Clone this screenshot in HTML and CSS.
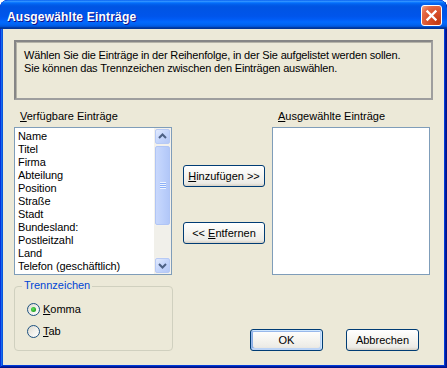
FILE: index.html
```html
<!DOCTYPE html>
<html lang="de">
<head>
<meta charset="utf-8">
<title>Ausgewählte Einträge</title>
<link rel="stylesheet" href="styles.css">
</head>
<body>
<div class="window">
  <div class="titlebar">
    <span class="title">Ausgewählte Einträge</span>
    <button class="close" aria-label="Schließen">
      <svg width="19" height="19" viewBox="0 0 19 19"><path d="M5.5 5.5 L13.5 13.5 M13.5 5.5 L5.5 13.5" stroke="#fff" stroke-width="2.4" stroke-linecap="square" fill="none"/></svg>
    </button>
  </div>
  <div class="client">
    <div class="info">
      <p>Wählen Sie die Einträge in der Reihenfolge, in der Sie aufgelistet werden sollen.<br>Sie können das Trennzeichen zwischen den Einträgen auswählen.</p>
    </div>
    <div class="lists">
      <div class="col">
        <div class="label"><u>V</u>erfügbare Einträge</div>
        <div class="listbox">
          <ul class="items">
            <li>Name</li>
            <li>Titel</li>
            <li>Firma</li>
            <li>Abteilung</li>
            <li>Position</li>
            <li>Straße</li>
            <li>Stadt</li>
            <li>Bundesland:</li>
            <li>Postleitzahl</li>
            <li>Land</li>
            <li>Telefon (geschäftlich)</li>
          </ul>
          <div class="scrollbar">
            <div class="sb-btn">
              <svg width="15" height="15" viewBox="0 0 15 15"><path d="M4 9 L7.5 5.5 L11 9" stroke="#4D6185" stroke-width="2" fill="none"/></svg>
            </div>
            <div class="sb-thumb"><span class="grip"></span></div>
            <div class="sb-track"></div>
            <div class="sb-btn">
              <svg width="15" height="15" viewBox="0 0 15 15"><path d="M4 6 L7.5 9.5 L11 6" stroke="#4D6185" stroke-width="2" fill="none"/></svg>
            </div>
          </div>
        </div>
      </div>
      <div class="mid">
        <button class="btn btn-wide"><u>H</u>inzufügen &gt;&gt;</button>
        <button class="btn btn-wide">&lt;&lt; <u>E</u>ntfernen</button>
      </div>
      <div class="col">
        <div class="label"><u>A</u>usgewählte Einträge</div>
        <div class="listbox"></div>
      </div>
    </div>
    <div class="bottom">
      <div class="group">
        <span class="group-title">Trennzeichen</span>
        <label class="radio"><span class="dot checked"></span><span><u>K</u>omma</span></label>
        <label class="radio"><span class="dot"></span><span><u>T</u>ab</span></label>
      </div>
      <div class="actions">
        <button class="btn btn-default">OK</button>
        <button class="btn">Abbrechen</button>
      </div>
    </div>
  </div>
</div>
</body>
</html>
```
FILE: styles.css
```css
html, body {
  margin: 0;
  padding: 0;
  background: #ffffff;
}
body {
  font-family: "Liberation Sans", Tahoma, Arial, sans-serif;
  font-size: 11px;
  color: #000;
}
.window {
  width: 447px;
  height: 368px;
  box-sizing: border-box;
  display: flex;
  flex-direction: column;
  background: #0250E2;
  border-radius: 8px 8px 0 0;
  overflow: hidden;
  box-shadow: inset -1px -1px #00138C, inset 1px 1px #0831D9, inset -2px -2px #001EA0, inset 2px 2px #166AEE, inset -3px -3px #003BDA, inset 3px 3px #0855DD;
}
.titlebar {
  flex: none;
  height: 29px;
  box-sizing: border-box;
  display: flex;
  align-items: flex-start;
  justify-content: space-between;
  padding: 0 5px 0 7px;
  border-radius: 8px 8px 0 0;
  background: linear-gradient(180deg, #0058EE 0%, #3593FF 4%, #288EFF 6%, #127DFF 8%, #036FFC 10%, #0262EE 14%, #0057E5 20%, #0054E3 24%, #0055EB 56%, #005BF5 66%, #026AFE 76%, #0062EF 86%, #0052D6 92%, #0040AB 94%, #003092 100%);
}
.title {
  margin-top: 10px;
  font-weight: bold;
  font-size: 12px;
  line-height: 14px;
  color: #fff;
  letter-spacing: 0.2px;
  text-shadow: 1px 1px #0F1089;
}
.close {
  margin: 5px 0 0;
  padding: 0;
  width: 21px;
  height: 21px;
  box-sizing: border-box;
  border: 1px solid #fff;
  border-radius: 3px;
  background: radial-gradient(circle at 85% 85%, #C33A12 0%, #D9502A 45%, #E56A46 75%, #F2A78C 100%);
  display: flex;
  align-items: center;
  justify-content: center;
}
.close svg { display: block; }
.client {
  flex: 1;
  margin: 0 3px 3px;
  background: #ECE9D8;
  padding: 11px 11px 0;
  display: flex;
  flex-direction: column;
}
.info {
  height: 60px;
  box-sizing: border-box;
  border: 2px solid #8F8F8F;
  border-color: #868686 #9E9E9E #9E9E9E #868686;
  box-shadow: inset 1px 1px #B5B3A8;
  padding: 7px 8px;
}
.info p {
  margin: 0;
  line-height: 13px;
  letter-spacing: -0.17px;
}
.lists {
  display: flex;
  margin-top: 10px;
}
.col {
  width: 158px;
  display: flex;
  flex-direction: column;
}
.label {
  line-height: 13px;
  padding-left: 6px;
  margin-bottom: 4px;
}
.listbox {
  height: 148px;
  box-sizing: border-box;
  border: 1px solid #7F9DB9;
  background: #fff;
  display: flex;
}
.items {
  flex: 1;
  list-style: none;
  margin: 0;
  padding: 2px 0 0 3px;
  overflow: hidden;
}
.items li {
  line-height: 13px;
  white-space: nowrap;
  letter-spacing: -0.08px;
}
.scrollbar {
  width: 17px;
  flex: none;
  display: flex;
  flex-direction: column;
  background: #F3F1EC;
}
.sb-btn {
  height: 15px;
  margin: 1px;
  box-sizing: border-box;
  border: 1px solid #B7CAF5;
  border-radius: 2px;
  background: linear-gradient(135deg, #E3EBFE 0%, #C5D6FC 50%, #B5C8F6 100%);
  display: flex;
  align-items: center;
  justify-content: center;
}
.sb-btn svg { display: block; margin: -1px; }
.sb-thumb {
  height: 79px;
  margin: 1px;
  box-sizing: border-box;
  border: 1px solid #B0C5F5;
  border-radius: 2px;
  background: linear-gradient(90deg, #C9D8FC 0%, #BDD0FB 50%, #B2C7F8 100%);
  display: flex;
  align-items: center;
  justify-content: center;
}
.grip {
  width: 6px;
  height: 7px;
  background: repeating-linear-gradient(180deg, #EEF4FE 0 1px, #8CB0F8 1px 2px);
}
.sb-track {
  flex: 1;
  background: #F1F0EA;
}
.mid {
  width: 82px;
  margin: 0 7px 0 11px;
  padding-top: 55px;
  display: flex;
  flex-direction: column;
  gap: 35px;
}
.btn {
  font-family: "Liberation Sans", Tahoma, Arial, sans-serif;
  font-size: 11px;
  color: #000;
  height: 22px;
  box-sizing: border-box;
  padding: 0;
  border: 1px solid #003C74;
  border-radius: 3px;
  background: linear-gradient(180deg, #FFFFFF 0%, #F5F4EF 50%, #ECEBE6 86%, #D6D0C5 100%);
  line-height: 20px;
  text-align: center;
}
.btn-wide { width: 82px; }
.bottom {
  display: flex;
  align-items: flex-end;
  margin-top: 11px;
}
.group {
  width: 159px;
  height: 65px;
  box-sizing: border-box;
  border: 1px solid #D0D0BF;
  border-radius: 4px;
  position: relative;
  padding: 16px 0 0 12px;
}
.group-title {
  position: absolute;
  top: -8px;
  left: 7px;
  padding: 0 2px;
  line-height: 13px;
  background: #ECE9D8;
  color: #0046D5;
}
.radio {
  display: flex;
  align-items: center;
  height: 13px;
  gap: 3px;
  line-height: 13px;
}
.radio + .radio { margin-top: 9px; }
.dot {
  width: 13px;
  height: 13px;
  box-sizing: border-box;
  border: 1px solid #1C5180;
  border-radius: 50%;
  background: linear-gradient(135deg, #DCD9CE 0%, #F0EFEA 50%, #FFFFFF 100%);
  display: flex;
  align-items: center;
  justify-content: center;
}
.dot.checked::after {
  content: "";
  width: 5px;
  height: 5px;
  border-radius: 50%;
  background: radial-gradient(circle at 40% 40%, #5FE35F 0%, #21A121 70%, #1A8E1A 100%);
}
.actions {
  display: flex;
  gap: 23px;
  margin-left: 77px;
}
.actions .btn { width: 73px; }
.btn-default {
  box-shadow: inset -1px 1px #CEE7FF, inset 1px 2px #98B8EA, inset -2px -2px #BCD4F6, inset 1px -1px #89ADE4, inset 2px -2px #89ADE4;
}
```
